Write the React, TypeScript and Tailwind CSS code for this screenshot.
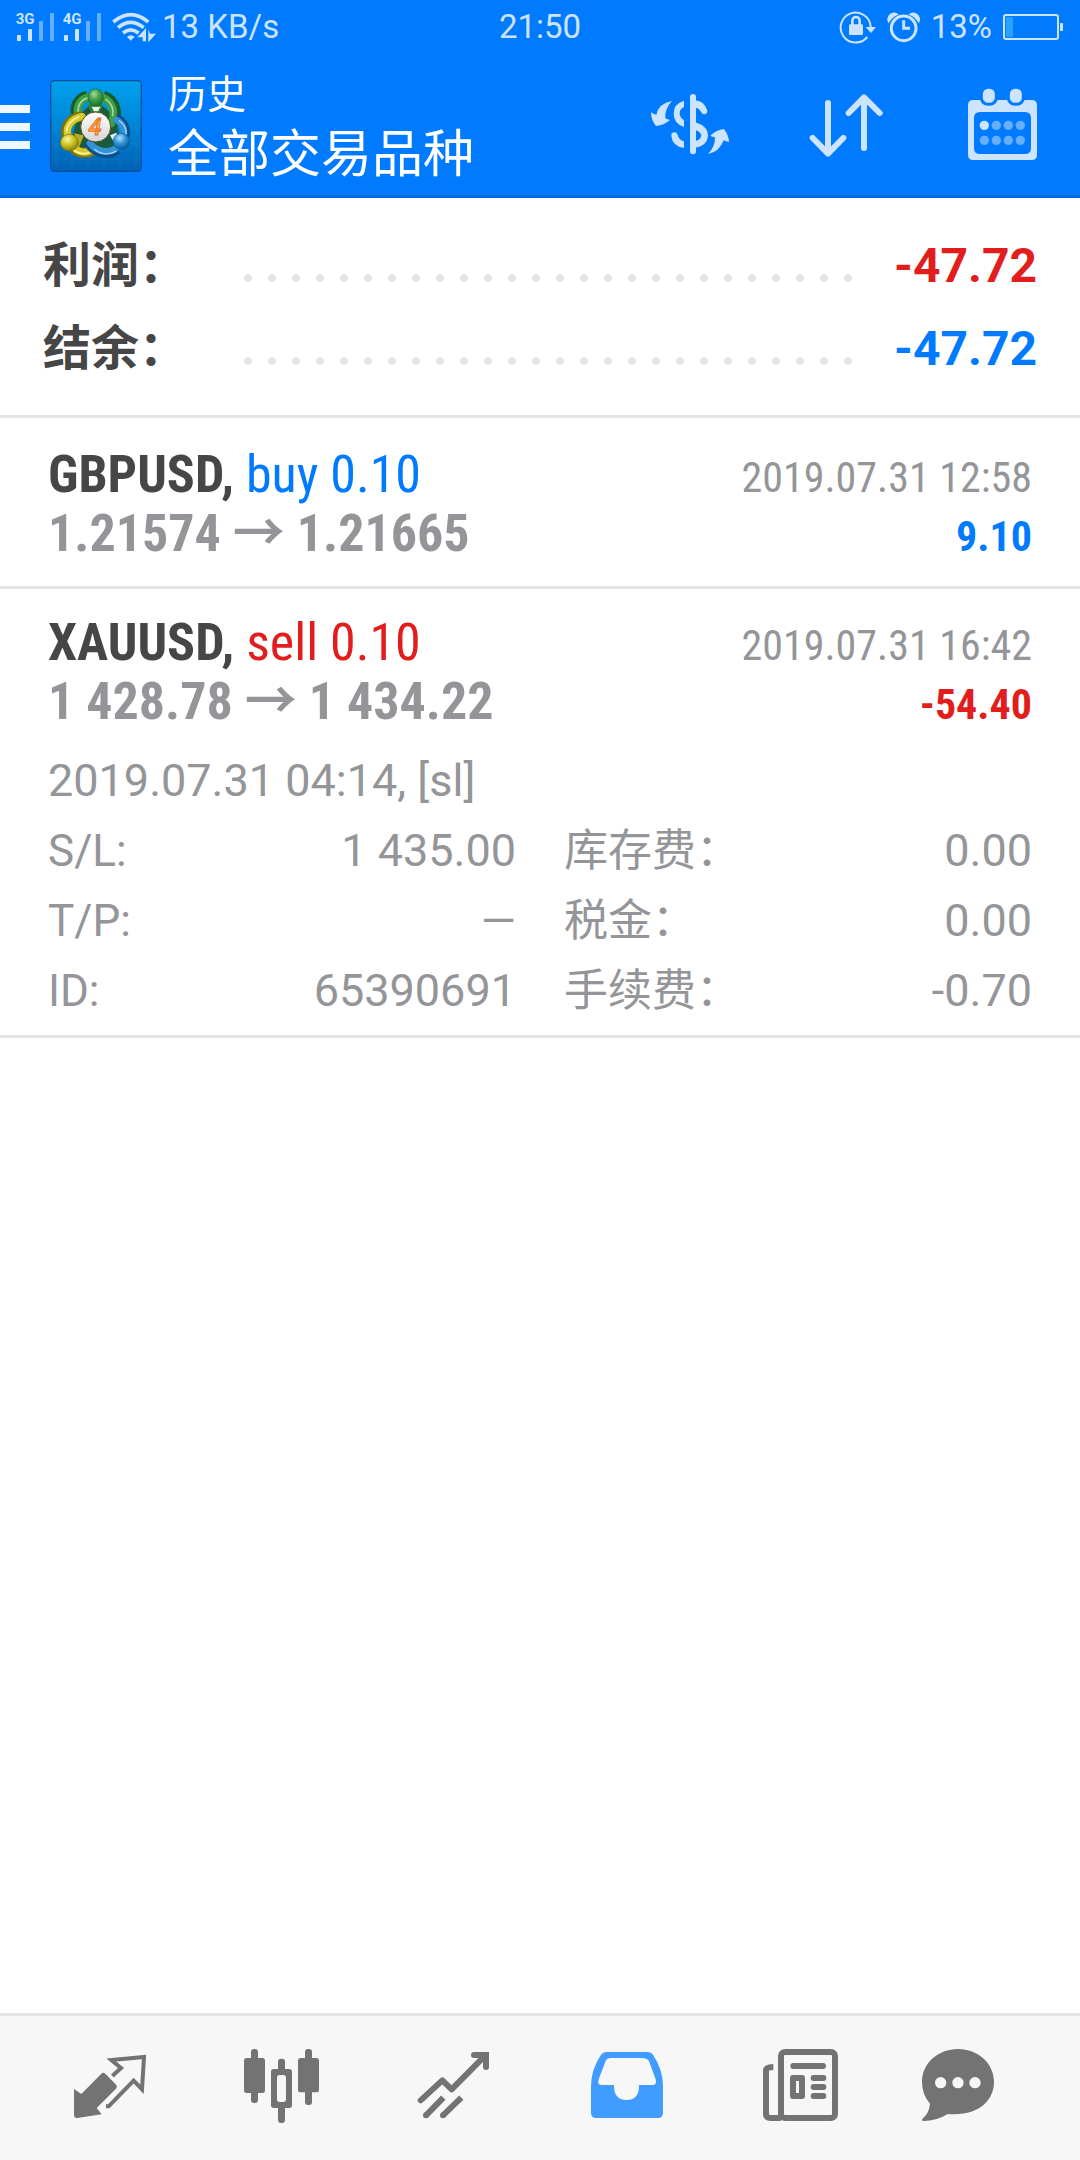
import type { ReactNode } from "react";

const iconInk = "#cce4ff";
const navInk = "#737373";

function Signal({ label }: { label: string }) {
  return (
    <svg className="h-8 w-[39px] shrink-0" viewBox="48 33 117 96" aria-label={label}>
      <text x="47" y="72" fontSize="45" fontWeight="700" fill={iconInk} className="font-['Roboto',sans-serif]">{label}</text>
      <g fill={iconInk}>
        <rect x="51" y="105" width="12" height="18" rx="2" />
        <rect x="84" y="87" width="12" height="36" rx="2" />
        <g opacity="0.5">
          <rect x="117" y="63" width="12" height="60" rx="2" />
          <rect x="150" y="39" width="12" height="84" rx="2" />
        </g>
      </g>
    </svg>
  );
}

function WifiIcon() {
  return (
    <svg className="h-8 w-11 shrink-0" viewBox="336 33 132 96" aria-label="Wi-Fi">
      <g fill="none" stroke={iconInk} strokeWidth="11">
        <path d="M340 66 Q392 22 445 66" />
        <path d="M354 83 Q392 51 431 83" />
        <path d="M369 99 Q392 80 416 99" />
      </g>
      <path d="M381 110 Q392 101 404 110 L392 122Z" fill={iconInk} />
      <path d="M412 112 L438 84 V124 H428 V112Z M445 88 L450 101 H468 L445 127Z" fill={iconInk} />
    </svg>
  );
}

function LockRotateIcon() {
  return (
    <svg className="h-[34px] w-[38px] shrink-0" viewBox="60 30 114 102" aria-label="Rotation lock">
      <path d="M145 111 A45 45 0 1 1 155 81" fill="none" stroke={iconInk} strokeWidth="6" />
      <path d="M140 81 H171 L156 99Z" fill={iconInk} />
      <path d="M100 75 V62 A11 11 0 0 1 122 62 V75" fill="none" stroke={iconInk} strokeWidth="8" />
      <rect x="90" y="73" width="42" height="32" rx="4" fill={iconInk} />
    </svg>
  );
}

function AlarmIcon() {
  return (
    <svg className="size-[34px] shrink-0" viewBox="204 30 102 102" aria-label="Alarm">
      <circle cx="254" cy="85" r="37" fill="none" stroke={iconInk} strokeWidth="9" />
      <path d="M254 61 V85 H273" fill="none" stroke={iconInk} strokeWidth="9" />
      <path d="M209 66 A18 18 0 0 1 235 43 Q218 50 209 66Z M299 66 A18 18 0 0 0 273 43 Q290 50 299 66Z" fill={iconInk} stroke={iconInk} strokeWidth="4" />
    </svg>
  );
}

function BatteryIcon() {
  return (
    <svg className="h-7 w-[62px] shrink-0" viewBox="549 39 186 84" aria-label="Battery">
      <rect x="555" y="45" width="162" height="72" rx="6" fill="none" stroke={iconInk} strokeWidth="6" />
      <rect x="561" y="51" width="21" height="60" fill="#2aa0ff" />
      <rect x="723" y="69" width="9" height="24" rx="2" fill={iconInk} />
    </svg>
  );
}

function AppLogo() {
  return (
    <svg className="size-[92px] shrink-0" viewBox="150 60 276 276" aria-label="MetaTrader 4">
      <defs>
        <linearGradient id="tile" x1="0" y1="0" x2="0" y2="1">
          <stop offset="0" stopColor="#00a0ee" />
          <stop offset="0.5" stopColor="#0084d6" />
          <stop offset="1" stopColor="#0061b4" />
        </linearGradient>
        <radialGradient id="greenHead" cx="0.4" cy="0.3" r="0.7">
          <stop offset="0" stopColor="#a5dc9a" />
          <stop offset="0.5" stopColor="#3f9f47" />
          <stop offset="1" stopColor="#1d6f2b" />
        </radialGradient>
        <radialGradient id="yellowHead" cx="0.4" cy="0.3" r="0.7">
          <stop offset="0" stopColor="#fbf6a0" />
          <stop offset="0.5" stopColor="#cfc525" />
          <stop offset="1" stopColor="#857d0c" />
        </radialGradient>
        <radialGradient id="blueHead" cx="0.4" cy="0.3" r="0.7">
          <stop offset="0" stopColor="#b5e3fb" />
          <stop offset="0.5" stopColor="#2e94d6" />
          <stop offset="1" stopColor="#0c5a9c" />
        </radialGradient>
        <linearGradient id="disc" x1="0" y1="0" x2="0" y2="1">
          <stop offset="0" stopColor="#ffffff" />
          <stop offset="1" stopColor="#d5d5d8" />
        </linearGradient>
      </defs>
      <rect x="152" y="62" width="272" height="272" rx="12" fill="url(#tile)" stroke="#04509a" strokeWidth="4" />
      <path d="M168 64V332M216 64V332M264 64V332M312 64V332M360 64V332M408 64V332M154 108H422M154 156H422M154 204H422M154 252H422M154 300H422" stroke="#4cc0ff" strokeOpacity="0.12" strokeWidth="3" />
      <path d="M232 170 L287 120 L345 170 L360 240 L330 270 L287 262 L240 270 L215 240Z" fill="#1c5a3c" />
      <g fill="none" strokeLinecap="round">
        <path d="M245 190 C215 160 225 118 262 108 M310 108 C350 122 356 165 336 196" stroke="#155f2c" strokeWidth="32" strokeLinecap="butt" />
        <path d="M238 170 C226 145 240 116 265 112 M308 112 C338 125 348 160 334 190" stroke="#3f9f47" strokeWidth="24" />
        <path d="M235 158 C232 134 246 118 262 114 M318 118 C336 130 342 150 338 166" stroke="#a9d79c" strokeWidth="5" />
        <path d="M248 168 C204 174 192 206 200 228 M220 264 C238 286 272 280 288 266" stroke="#7d7410" strokeWidth="30" strokeLinecap="butt" />
        <path d="M246 170 C212 176 196 204 204 226 M224 264 C240 280 264 280 278 268" stroke="#d5ca2a" strokeWidth="22" />
        <path d="M236 170 C212 180 200 198 200 214 M222 270 C236 282 254 282 266 278" stroke="#fbf5a2" strokeWidth="5" />
        <path d="M346 174 C374 186 380 210 374 230 M262 246 C288 284 326 288 354 268" stroke="#0e4f8b" strokeWidth="28" strokeLinecap="butt" />
        <path d="M350 180 C370 192 374 210 370 228 M270 250 C290 276 322 280 346 266" stroke="#3293d7" strokeWidth="20" />
        <path d="M358 182 C374 194 380 208 378 222 M284 268 C300 284 328 286 348 274" stroke="#a4d9f6" strokeWidth="4" />
      </g>
      <path d="M262 136 Q286 120 310 136 L298 158 H276Z" fill="#2f853a" />
      <path d="M275 140 H301 L294 154 H282Z" fill="#e9f5e7" />
      <path d="M222 220 L252 226 L236 264Z" fill="#b8ad1e" />
      <path d="M330 226 L350 218 L352 264Z" fill="#e3f1fa" />
      <ellipse cx="287" cy="113" rx="23" ry="26" fill="url(#greenHead)" stroke="#1b6a2a" strokeWidth="2" />
      <ellipse cx="208" cy="248" rx="27" ry="25" fill="url(#yellowHead)" stroke="#797108" strokeWidth="2" />
      <ellipse cx="364" cy="244" rx="25" ry="24" fill="url(#blueHead)" stroke="#0c5799" strokeWidth="2" />
      <circle cx="287" cy="201" r="45" fill="url(#disc)" stroke="#5a4d20" strokeWidth="3" />
      <text x="285" y="226" textAnchor="middle" fontSize="72" fontWeight="500" fontStyle="italic" fill="#fbb040" stroke="#e8742c" strokeWidth="3" className="font-['Roboto',sans-serif]">4</text>
    </svg>
  );
}

function SymbolIcon() {
  return (
    <svg className="size-24" viewBox="66 54 288 288" aria-hidden="true">
      <g fill={iconInk}>
        <rect x="210" y="102" width="18" height="181" rx="9" />
        <path d="M156 123 Q116 130 109 164 Q100 162 93 157 Q93 180 108 198 Q132 196 150 180 Q143 178 136 175 Q134 146 156 123Z" />
        <path d="M264 282 Q286 260 285 232 Q277 231 271 227 Q290 209 312 207 Q326 225 327 246 Q319 245 311 241 Q298 276 264 282Z" />
        <path d="M192 122 V141 Q179 147 179 160 Q179 173 192 181 V201 Q161 190 161 161 Q161 131 192 122Z" />
        <path d="M192 264 Q157 259 154 228 A9 9 0 0 1 173 225 Q176 240 192 244Z" />
        <path d="M226 121 Q254 125 261 150 A9 9 0 0 1 244 157 Q239 145 226 143Z" />
        <path d="M226 187 Q264 199 264 226 Q262 258 226 263 V243 Q243 240 244 226 Q242 216 226 210Z" />
      </g>
    </svg>
  );
}

function SortIcon() {
  return (
    <svg className="size-24" viewBox="534 54 288 288" aria-hidden="true">
      <path d="M624 129 V279 M578 234 L624 281 L670 234 M732 264 V114 M686 159 L732 112 L779 159" fill="none" stroke={iconInk} strokeWidth="18" strokeLinecap="round" strokeLinejoin="round" />
    </svg>
  );
}

function CalendarIcon() {
  const columns = [1093, 1129, 1165, 1201];
  return (
    <svg className="size-24" viewBox="1002 54 288 288" aria-hidden="true">
      <path fillRule="evenodd" fill={iconInk} d="M1060 120 H1235 Q1251 120 1251 136 V284 Q1251 300 1235 300 H1060 Q1044 300 1044 284 V136 Q1044 120 1060 120Z M1080 156 Q1062 156 1062 174 V264 Q1062 282 1080 282 H1215 Q1233 282 1233 264 V174 Q1233 156 1215 156Z" />
      <g fill={iconInk} stroke="#007aff" strokeWidth="9">
        <rect x="1084" y="82" width="45" height="51" rx="20" />
        <rect x="1165" y="82" width="45" height="51" rx="20" />
      </g>
      {columns.map((x, i) => (
        <g key={x} fill={iconInk}>
          <circle cx={x} cy="196" r="14" opacity={i === 0 ? 1 : 0.5} />
          <circle cx={x} cy="241" r="14" opacity="0.5" />
        </g>
      ))}
    </svg>
  );
}

function QuotesIcon() {
  return (
    <svg className="size-24" viewBox="66 120 288 288" aria-hidden="true">
      <path d="M102 267 L124 282 L184 221 Q190 216 196 221 L229 255 Q233 260 228 266 L170 324 L185 343 L112 354 Q102 354 102 344Z" fill={navInk} />
      <path d="M217 228 L243 204 L214 180 L312 171 L306 268 L281 242 L206 319 H198" fill="none" stroke={navInk} strokeWidth="12" />
    </svg>
  );
}

function CandlesIcon() {
  return (
    <svg className="size-24" viewBox="582 120 288 288" aria-hidden="true">
      <g fill={navInk}>
        <rect x="633" y="147" width="21" height="162" rx="9" />
        <rect x="612" y="174" width="63" height="105" rx="8" />
        <rect x="795" y="147" width="21" height="168" rx="9" />
        <rect x="774" y="174" width="63" height="103" rx="8" />
        <rect x="714" y="176" width="21" height="193" rx="9" />
        <rect x="693" y="207" width="63" height="117" rx="8" />
      </g>
      <rect x="711" y="225" width="27" height="81" rx="8" fill="#f7f7f7" />
    </svg>
  );
}

function TrendIcon() {
  return (
    <svg className="size-24" viewBox="1098 120 288 288" aria-hidden="true">
      <g fill="none" stroke={navInk} strokeWidth="18">
        <path d="M1142 301 L1207 241 L1235 268 L1336 166" strokeLinecap="round" strokeLinejoin="round" />
        <path d="M1302 165 H1338 V201" strokeLinecap="round" />
        <path d="M1158 346 L1210 293 M1209 346 L1264 293" />
      </g>
      <circle cx="1158" cy="346" r="9" fill={navInk} />
      <circle cx="1209" cy="346" r="9" fill={navInk} />
    </svg>
  );
}

function InboxIcon() {
  return (
    <svg className="size-24" viewBox="54 120 288 288" aria-hidden="true">
      <path fillRule="evenodd" fill="#409cff" d="M138 156 H264 Q273 156 279 164 Q309 209 309 258 V338 Q309 354 293 354 H109 Q93 354 93 338 V258 Q93 209 123 164 Q129 156 138 156Z M152 174 Q141 174 137 183 L116 238 Q111 255 124 255 H162 V262 Q164 300 200 300 Q235 300 237 262 V255 H279 Q291 255 287 238 L267 184 Q263 174 242 174Z" />
    </svg>
  );
}

function NewsIcon() {
  return (
    <svg className="size-24" viewBox="570 120 288 288" aria-hidden="true">
      <g fill="none" stroke={navInk} strokeWidth="18">
        <rect x="663" y="156" width="162" height="198" rx="12" />
        <path d="M640 201 Q618 201 618 212 V342 Q618 354 632 354 H663" />
        <path d="M700 198 H789 M761 234 H790 M761 261 H790 M761 288 H790" strokeLinecap="round" />
        <rect x="699" y="234" width="27" height="54" strokeLinejoin="round" />
      </g>
    </svg>
  );
}

function ChatIcon() {
  return (
    <svg className="size-24" viewBox="1086 120 288 288" aria-hidden="true">
      <path d="M1194 147 C1254 147 1302 190 1302 246 C1302 302 1254 350 1163 342 Q1130 363 1090 363 Q1083 361 1089 355 Q1108 338 1110 311 Q1086 284 1086 246 C1086 190 1134 147 1194 147Z" fill={navInk} />
      <g fill="#f7f7f7">
        <circle cx="1142" cy="248" r="17" />
        <circle cx="1194" cy="248" r="17" />
        <circle cx="1245" cy="248" r="17" />
      </g>
    </svg>
  );
}

function SummaryRow({ label, value, valueClass }: { label: string; value: string; valueClass: string }) {
  return (
    <div className="flex h-[83px] items-baseline text-[48px] leading-[83px]">
      <dt className="w-[193px] shrink-0 font-bold text-[#464646]">{label}</dt>
      <div className="h-2 flex-1 bg-[radial-gradient(circle,#e5e5e5_3px,#e5e5e5_4px,transparent_4px)] bg-[length:24px_8px] bg-repeat-round" />
      <dd className={`w-[177px] shrink-0 text-right font-bold ${valueClass}`}>{value}</dd>
    </div>
  );
}

type DealProps = {
  symbol: string;
  action: string;
  actionClass: string;
  open: string;
  close: string;
  time: string;
  profit: string;
  profitClass: string;
  children?: ReactNode;
};

function Deal({ symbol, action, actionClass, open, close, time, profit, profitClass, children }: DealProps) {
  return (
    <li className="border-b-[3px] border-[#e5e5e5] px-12 pt-6">
      <div className="font-['Roboto_Condensed','Roboto','Noto_Sans_CJK_SC',sans-serif] text-[#949599]">
        <div className="flex items-baseline justify-between">
          <p className="text-[52px] leading-[59px] font-bold text-[#464646]">
            {symbol}, <span className={`font-normal ${actionClass}`}>{action}</span>
          </p>
          <time className="text-[42px] leading-none">{time}</time>
        </div>
        <div className="flex items-baseline justify-between">
          <p className="text-[52px] leading-[59px] font-bold">
            {open} → {close}
          </p>
          <p className={`text-[42px] leading-none font-bold ${profitClass}`}>{profit}</p>
        </div>
      </div>
      {children}
    </li>
  );
}

function Detail({ label, value }: { label: string; value: string }) {
  return (
    <div className="flex justify-between">
      <dt className="text-[44px]">{label}</dt>
      <dd>{value}</dd>
    </div>
  );
}

const tabs = [
  { label: "行情", icon: <QuotesIcon /> },
  { label: "图表", icon: <CandlesIcon /> },
  { label: "交易", icon: <TrendIcon /> },
  { label: "历史", icon: <InboxIcon /> },
  { label: "新闻", icon: <NewsIcon /> },
  { label: "消息", icon: <ChatIcon /> },
];

export default function App() {
  return (
    <div className="flex min-h-screen flex-col bg-white font-['Roboto','Noto_Sans_CJK_SC',sans-serif]">
      <header className="border-b-[3px] border-[#0068e0] bg-[#007aff]">
        <div className="grid h-[54px] grid-cols-[1fr_auto_1fr] items-center px-4 text-[33px] leading-[54px] text-[#cce4ff]">
          <div className="flex items-center">
            <Signal label="3G" />
            <span className="w-2" />
            <Signal label="4G" />
            <span className="w-[10px]" />
            <WifiIcon />
            <span className="pl-[6px]">13 KB/s</span>
          </div>
          <time>21:50</time>
          <div className="flex items-center justify-end">
            <LockRotateIcon />
            <span className="w-[10px]" />
            <AlarmIcon />
            <span className="px-[10px]">13%</span>
            <BatteryIcon />
          </div>
        </div>
        <div className="flex h-[141px] items-center">
          <button type="button" aria-label="菜单" className="flex w-[30px] flex-col gap-[10px] pt-1">
            <span className="h-2 bg-[#f2f8ff]" />
            <span className="h-2 bg-[#f2f8ff]" />
            <span className="h-2 bg-[#f2f8ff]" />
          </button>
          <div className="ml-5 pt-[3px]">
            <AppLogo />
          </div>
          <div className="ml-[26px] flex-1 pt-[6px] text-white">
            <p className="text-[39px] leading-[54px]">历史</p>
            <h1 className="text-[51px] leading-[66px]">全部交易品种</h1>
          </div>
          <button type="button" aria-label="交易品种" className="flex w-[156px] justify-center pt-[3px]"><SymbolIcon /></button>
          <button type="button" aria-label="排序" className="flex w-[156px] justify-center pt-[3px]"><SortIcon /></button>
          <button type="button" aria-label="日期" className="flex w-[156px] justify-center pt-[3px]"><CalendarIcon /></button>
        </div>
      </header>

      <main className="flex-1">
        <dl className="border-b-[3px] border-[#e5e5e5] px-[43px] pt-[26px] pb-[25px]">
          <SummaryRow label="利润：" value="-47.72" valueClass="text-[#e21d1d]" />
          <SummaryRow label="结余：" value="-47.72" valueClass="text-[#007aff]" />
        </dl>
        <ul className="pt-[3px]">
          <Deal
            symbol="GBPUSD"
            action="buy 0.10"
            actionClass="text-[#007aff]"
            open="1.21574"
            close="1.21665"
            time="2019.07.31 12:58"
            profit="9.10"
            profitClass="text-[#007aff]"
          >
            <div className="h-[23px]" />
          </Deal>
          <Deal
            symbol="XAUUSD"
            action="sell 0.10"
            actionClass="text-[#e21d1d]"
            open="1 428.78"
            close="1 434.22"
            time="2019.07.31 16:42"
            profit="-54.40"
            profitClass="text-[#e21d1d]"
          >
            <div className="pt-[15px] pb-[9px] text-[45px] leading-[70px] text-[#949599]">
              <p>2019.07.31 04:14, [sl]</p>
              <dl className="grid grid-cols-2 gap-x-12">
                <Detail label="S/L:" value="1 435.00" />
                <Detail label="库存费：" value="0.00" />
                <Detail label="T/P:" value="—" />
                <Detail label="税金：" value="0.00" />
                <Detail label="ID:" value="65390691" />
                <Detail label="手续费：" value="-0.70" />
              </dl>
            </div>
          </Deal>
        </ul>
      </main>

      <nav className="grid h-[147px] grid-cols-6 border-t-[3px] border-[#e5e5e5] bg-[#f7f7f7] px-6">
        {tabs.map((tab) => (
          <button key={tab.label} type="button" aria-label={tab.label} className="flex items-center justify-center">
            {tab.icon}
          </button>
        ))}
      </nav>
    </div>
  );
}
